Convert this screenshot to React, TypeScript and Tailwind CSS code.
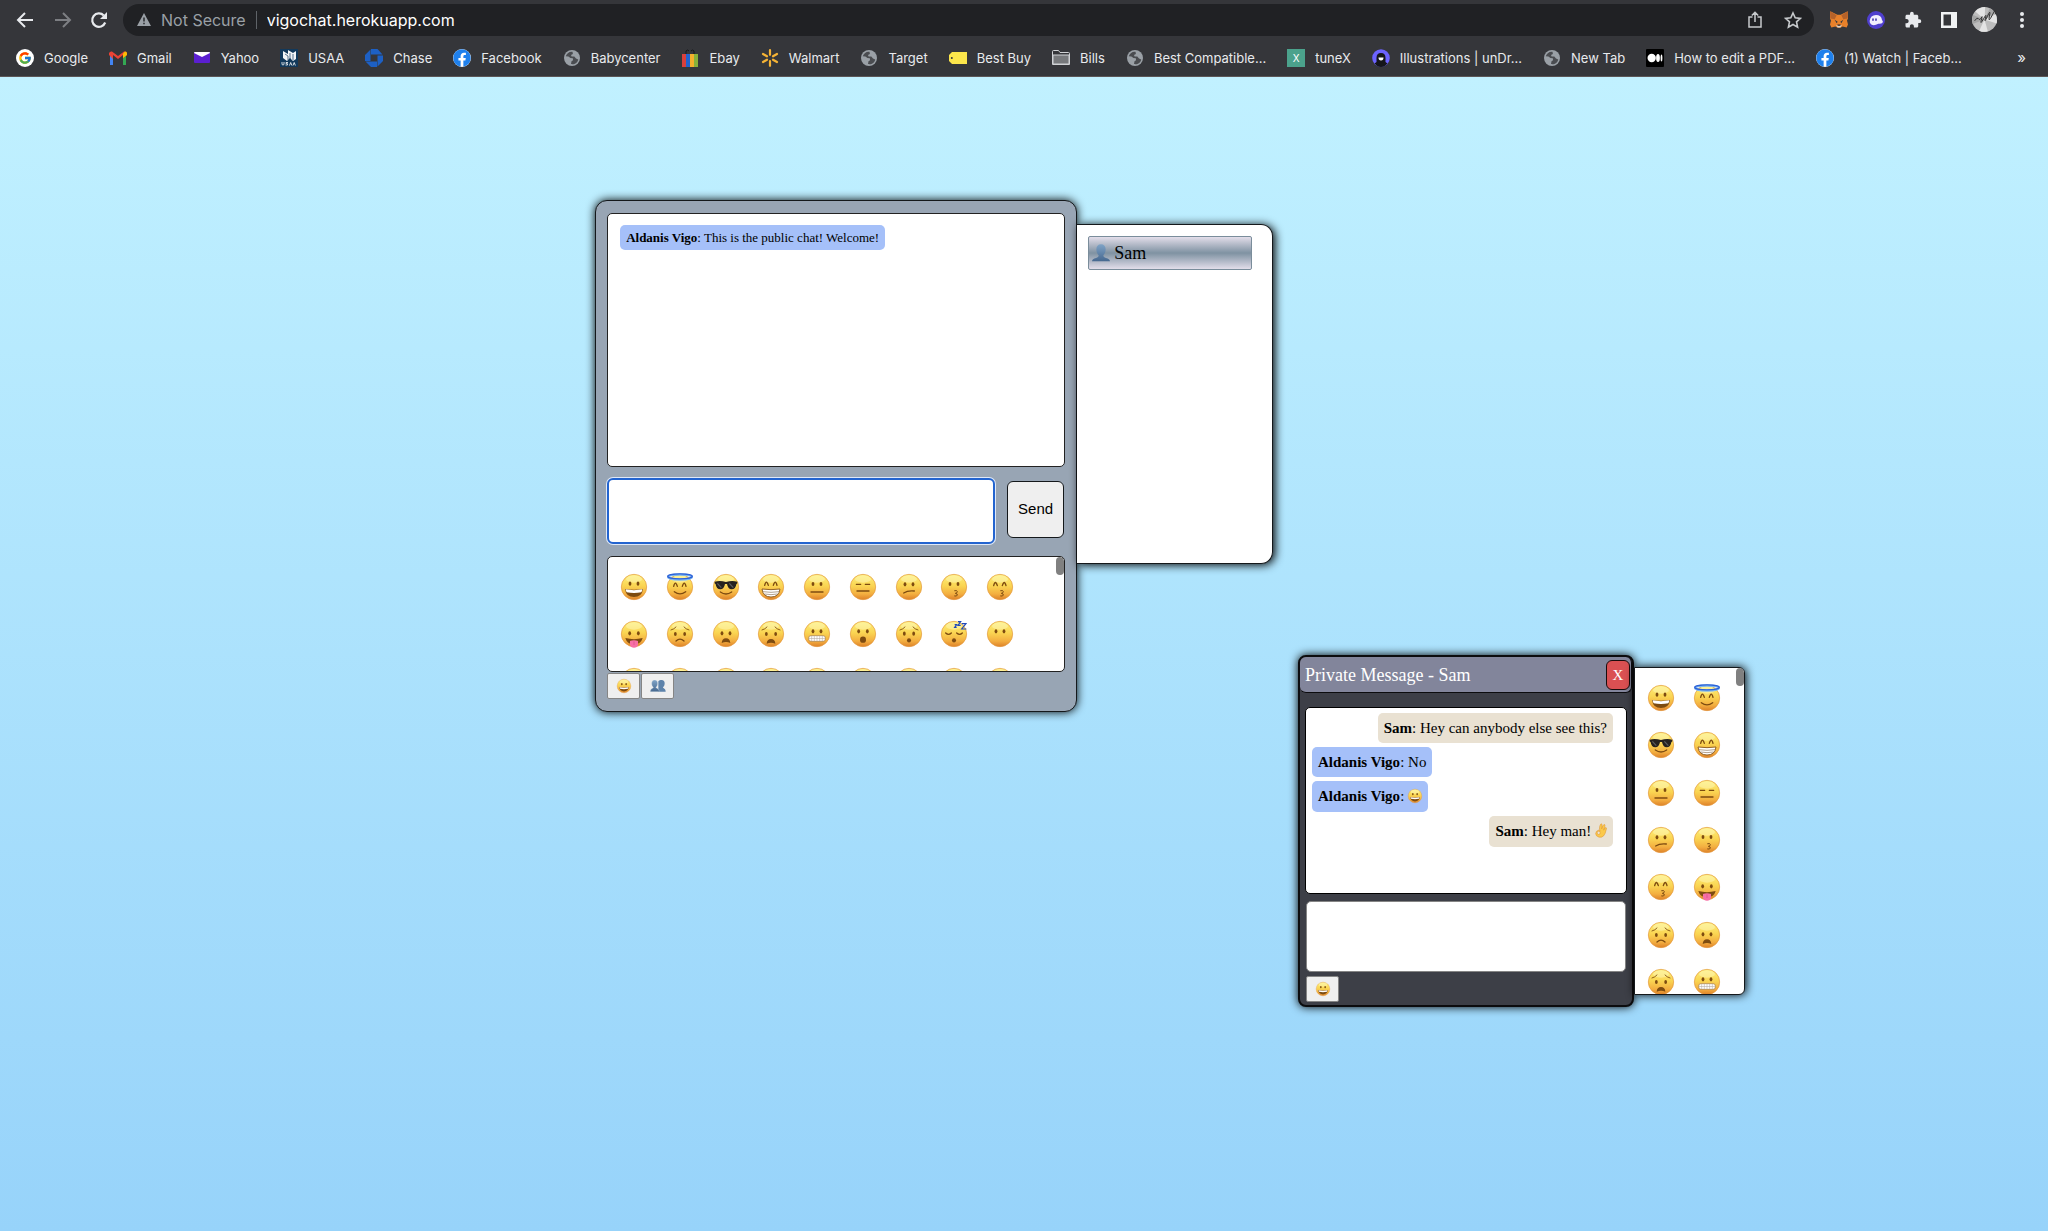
import React from 'react';
import { FcGoogle } from 'react-icons/fc';
import { FaFacebook } from 'react-icons/fa';
import { MdExtension } from 'react-icons/md';

type Mood =
  | 'grinning' | 'halo' | 'cool' | 'beaming' | 'neutral' | 'expressionless' | 'confused' | 'kissing' | 'kissing-smile'
  | 'tongue' | 'worried' | 'frowning' | 'anguished' | 'grimacing' | 'open' | 'hushed' | 'sleeping' | 'speechless';

const MOODS: Mood[] = [
  'grinning', 'halo', 'cool', 'beaming', 'neutral', 'expressionless', 'confused', 'kissing', 'kissing-smile',
  'tongue', 'worried', 'frowning', 'anguished', 'grimacing', 'open', 'hushed', 'sleeping', 'speechless',
];

const INK = '#7d4b10';

function DotEyes({ y, dx = 12 }: { y: number; dx?: number }) {
  return (
    <g fill={INK}>
      <ellipse cx={39 - dx} cy={y} rx="4.2" ry="6.2" />
      <ellipse cx={39 + dx} cy={y} rx="4.2" ry="6.2" />
    </g>
  );
}

function HappyEyes({ y }: { y: number }) {
  return (
    <g fill="none" stroke={INK} strokeWidth="4" strokeLinecap="round">
      <path d={`M20 ${y + 5}q5 -19 11 0`} />
      <path d={`M46 ${y + 5}q6 -19 11 0`} />
    </g>
  );
}

function Brows() {
  return (
    <g fill="none" stroke={INK} strokeWidth="2.6" strokeLinecap="round">
      <path d="M12 27q9 -2 15 -9" />
      <path d="M66 27q-9 -2 -15 -9" />
    </g>
  );
}

function Features({ mood }: { mood: Mood }) {
  const line = { fill: 'none', stroke: INK, strokeWidth: 4, strokeLinecap: 'round' as const };
  switch (mood) {
    case 'grinning':
      return (
        <>
          <DotEyes y={29} />
          <path d="M12 45q27 5 54 0q-3 24 -27 24q-24 0 -27 -24z" fill={INK} />
          <path d="M14 46q25 5 50 0q0 5 -3 9q-22 4 -44 0q-3 -4 -3 -9z" fill="#fff" />
        </>
      );
    case 'halo':
      return (
        <>
          <HappyEyes y={32} />
          <path d="M22 53q17 13 34 0" {...line} />
          <ellipse cx="39" cy="9" rx="36" ry="7.5" fill="none" stroke="#7cb7ef" strokeWidth="7" />
          <ellipse cx="39" cy="7" rx="37" ry="7.5" fill="none" stroke="#2f62d8" strokeWidth="4" />
        </>
      );
    case 'cool':
      return (
        <>
          <path d="M5 23q17 -4 34 1q17 -5 34 -1v5l-3 3q-2 15 -14 15q-11 0 -14 -16h-6q-3 16 -14 16q-12 0 -14 -15l-3 -3z" fill="#26221f" />
          <path d="M13 28l12 13M49 28l12 13" stroke="#5a5a5c" strokeWidth="4" />
          <path d="M22 54q17 12 34 0" {...line} />
        </>
      );
    case 'beaming':
      return (
        <>
          <HappyEyes y={29} />
          <path d="M12 45q27 4 54 0q-3 24 -27 24q-24 0 -27 -24z" fill="#fff" stroke={INK} strokeWidth="2.5" />
          <path d="M15 53q24 4 48 0M20 60q19 4 38 0" fill="none" stroke="#a58f78" strokeWidth="2.5" />
        </>
      );
    case 'neutral':
      return (<><DotEyes y={30} /><path d="M21 54h36" {...line} /></>);
    case 'expressionless':
      return (<><path d="M19 31h13M46 31h13M21 51h36" {...line} /></>);
    case 'confused':
      return (<><DotEyes y={31} /><path d="M23 57q12 -8 32 -6" {...line} /></>);
    case 'kissing':
    case 'kissing-smile':
      return (
        <>
          {mood === 'kissing' ? <DotEyes y={30} /> : <HappyEyes y={30} />}
          <path d="M41 50q8 -2 8 3q0 4 -6 5q7 1 6 5q-1 5 -8 3" fill="none" stroke={INK} strokeWidth="3" strokeLinecap="round" />
        </>
      );
    case 'tongue':
      return (
        <>
          <DotEyes y={37} dx={13} />
          <path d="M13 51q26 7 52 0q-5 19 -26 19q-21 0 -26 -19z" fill={INK} />
          <path d="M27 60q12 -4 24 0v11q-2 9 -12 9q-10 0 -12 -9z" fill="#f76fa6" />
          <path d="M39 61v11" stroke="#d84d86" strokeWidth="2" />
        </>
      );
    case 'worried':
      return (<><Brows /><DotEyes y={39} dx={14} /><path d="M27 60q12 -11 24 0" {...line} /></>);
    case 'frowning':
      return (<><DotEyes y={37} /><path d="M26 66q1 -14 13 -14q12 0 13 14q-13 -6 -26 0z" fill={INK} /></>);
    case 'anguished':
      return (<><Brows /><DotEyes y={39} dx={14} /><path d="M26 68q1 -14 13 -14q12 0 13 14q-13 -6 -26 0z" fill={INK} /></>);
    case 'grimacing':
      return (
        <>
          <DotEyes y={31} />
          <rect x="14" y="44" width="50" height="17" rx="7" fill="#fff" stroke="#a07a4c" strokeWidth="2" />
          <path d="M15 52.500h48M23 45v15M31 45v15M39 45v15M47 45v15M55 45v15" stroke="#b9aea4" strokeWidth="1.800" />
        </>
      );
    case 'open':
      return (<><DotEyes y={31} dx={13} /><ellipse cx="39" cy="56" rx="9" ry="9.5" fill={INK} /></>);
    case 'hushed':
      return (<><Brows /><DotEyes y={38} dx={14} /><ellipse cx="39" cy="58" rx="6" ry="6.5" fill={INK} /></>);
    case 'sleeping':
      return (
        <>
          <path d="M14 36q9 8 17 0M47 36q9 8 17 0" {...line} />
          <ellipse cx="39" cy="58" rx="6" ry="6.500" fill={INK} />
          <path d="M41 11h6l-6 8h6M51 2h8l-8 11h8M62 8h13l-13 16h14" fill="none" stroke="#2048b8" strokeWidth="3.500" />
        </>
      );
    default:
      return <DotEyes y={31} />;
  }
}

function Emoji({ mood, className }: { mood: Mood; className: string }) {
  return (
    <svg viewBox="0 0 78 78" className={`overflow-visible ${className}`} role="img" aria-label={mood}>
      <circle cx="39" cy="39" r="38" fill="url(#skin)" stroke="#e3953a" strokeWidth="2" />
      <ellipse cx="39" cy="15" rx="24" ry="11" fill="#fffbc4" opacity="0.45" />
      <Features mood={mood} />
    </svg>
  );
}

function Defs() {
  return (
    <svg className="absolute size-0" aria-hidden="true">
      <defs>
        <linearGradient id="skin" x1="0" y1="0" x2="0" y2="1">
          <stop offset="0" stopColor="#fdee7c" />
          <stop offset="0.45" stopColor="#fad552" />
          <stop offset="0.78" stopColor="#f3ae40" />
          <stop offset="1" stopColor="#dd8129" />
        </linearGradient>
        <linearGradient id="bust" x1="0" y1="0" x2="0" y2="1">
          <stop offset="0" stopColor="#7fa3c6" />
          <stop offset="1" stopColor="#46688f" />
        </linearGradient>
      </defs>
    </svg>
  );
}

function Bust({ className }: { className: string }) {
  return (
    <svg viewBox="0 0 54 54" className={className} aria-hidden="true">
      <path d="M27 1c9 0 14 6 14 15c0 8 -3 14 -7 18c0 5 3 6 8 8c8 2 11 4 12 10H0c1 -6 4 -8 12 -10c5 -2 8 -3 8 -8c-4 -4 -7 -10 -7 -18c0 -9 5 -15 14 -15z" fill="url(#bust)" />
    </svg>
  );
}

function Busts() {
  return (
    <svg viewBox="0 0 46 36" className="h-3 w-4" aria-hidden="true">
      <path d="M34 0c6 0 9 4 9 10c0 6 -2 9 -5 12c0 4 8 3 8 13H24V4c2 -3 6 -4 10 -4z" fill="#5d83ab" />
      <path d="M13 0c6 0 9 4 9 10c0 6 -2 9 -5 12c0 4 10 3 10 13H0c0 -10 9 -9 9 -13c-3 -3 -5 -6 -5 -12c0 -6 3 -10 9 -10z" fill="url(#bust)" stroke="#dfe6ee" strokeWidth="1" />
    </svg>
  );
}

function OkHand() {
  return (
    <svg viewBox="0 0 36 44" className="inline-block h-[15px] w-3 align-[-2px]" aria-label="ok hand" role="img">
      <path d="M15 24C12 16 14 7 17 3q4 -3 4 2l-1 12q3 -12 7 -13q4 0 3 4l-4 13q4 -9 7 -8q3 1 1 5q-3 15 -8 20q-6 6 -14 4q-10 -3 -10 -11q1 -8 8 -10q3 0 5 3z" fill="#fbc94a" stroke="#dc8f2a" strokeWidth="1.500" />
      <ellipse cx="11" cy="29" rx="4.500" ry="5" fill="#ebe3d5" stroke="#dc8f2a" strokeWidth="1.500" />
    </svg>
  );
}

const Globe = () => (
  <svg viewBox="0 0 16 16" className="size-4">
    <circle cx="8" cy="8" r="8" fill="#9aa0a6" />
    <path d="M8.500 1.800C6 1.200 2.600 3 1.800 6.200l2.600.3 2 1.600 2.400.2.300 2-1.600.9-.5 2.900c3.500.8 6.700-1.500 7.200-4.700l-2.200-.9-1.700-1.900-2.700-.2-.6-1.500L8.900 4z" fill="#4a4c50" />
  </svg>
);
const Gmail = () => (
  <svg viewBox="0 0 18 14" className="h-3.5 w-[18px]">
    <path d="M1 2v12h3V5z" fill="#4285f4" /><path d="M17 2v12h-3V5z" fill="#34a853" />
    <path d="M0 2Q1 0 3 .5L9 5l6-4.500Q17 0 18 2v2l-4 3V4L9 8 4 4v4L0 4z" fill="#ea4335" />
    <path d="M14 2.500l2-2Q18 .3 18 2.500V4l-4 3z" fill="#fbbc04" />
  </svg>
);
const Yahoo = () => (
  <svg viewBox="0 0 16 11" className="h-[11px] w-4"><rect width="16" height="11" rx="1" fill="#5b1fd1" /><path d="M0 1Q0 0 1 0h14q1 0 1 1L8 5z" fill="#fff" /></svg>
);
const Usaa = () => (
  <svg viewBox="0 0 18 18" className="size-[18px]">
    <rect width="18" height="18" fill="#12395b" />
    <path d="M3 2l5 3v6l-1 1-4-3zM8 1l5 3 3-2v8l-3 2-3-3-2 2z" fill="#f3f5f7" />
    <path d="M5 5l3 2v4M10 4v6M13 5v6" fill="none" stroke="#12395b" strokeWidth=".7" />
    <path d="M2 13v2q0 1 1 1t1-1v-2M8 13.500H6v1.200h1.500V16H5.500M9.500 16.500l1.200-3 1.200 3M13 16.500l1.200-3 1.200 3" fill="none" stroke="#fff" strokeWidth=".8" />
  </svg>
);
const Chase = () => (
  <svg viewBox="0 0 18 18" className="size-[18px]">
    <path d="M6 0h6.500L17.500 5.500H6zM18 6.500V12l-5.500 5.500V6.500zM12 18H6L.5 12.500H12zM0 12V6L5.500.5V12z" fill="#1d60c4" />
  </svg>
);
const Ebay = () => (
  <svg viewBox="0 0 16 18" className="h-[18px] w-4">
    <path d="M4 5V2q1.500-2 3 0M9 2q1.500-2 3 0v3" fill="none" stroke="#17181a" />
    <path d="M0 5h4v13H0z" fill="#d9403c" /><path d="M4 5h4v13H4z" fill="#2163cf" /><path d="M8 5h4v13H8z" fill="#f4b02c" /><path d="M12 5h4v13h-4z" fill="#87b13a" />
  </svg>
);
const Walmart = () => (
  <svg viewBox="0 0 18 18" className="size-[18px]" stroke="#f5b335" strokeWidth="2.200" strokeLinecap="round">
    <path d="M9 1.200v4.600M9 12.200v4.600M2 5l4 2.300M12 10.700L16 13M2 13l4-2.300M12 7.300L16 5" />
  </svg>
);
const Tag = () => (
  <svg viewBox="0 0 18 12" className="h-3 w-[18px]"><path d="M3 0h15v12H3L0 9V3z" fill="#fce64b" /><circle cx="2.800" cy="6" r="1" fill="#35363a" /></svg>
);
const Folder = () => (
  <svg viewBox="0 0 18 15" className="h-[15px] w-[18px]" fill="none" stroke="#d0d2d5">
    <path d="M.5 14.500V1.500q0-1 1-1h5l1.500 2h8.500q1 0 1 1v11z" /><path d="M1 5h16v9H1z" fill="#77797c" />
  </svg>
);
const TuneX = () => <span className="flex size-[18px] items-center justify-center bg-[#4ba28c] text-[10px] leading-none text-white">X</span>;
const Undraw = () => (
  <svg viewBox="0 0 18 18" className="size-[18px]">
    <circle cx="9" cy="9" r="8.800" fill="#6c63ff" />
    <path d="M4.500 13V9q0-5 4.500-5t4.500 5v4l2 1.500q-3 3.500-6.500 3.500T2.500 14.500z" fill="#15161a" /><path d="M6.500 8.500h5q0 3-2.500 3t-2.500-3z" fill="#fff" />
  </svg>
);
const Medium = () => (
  <svg viewBox="0 0 18 18" className="size-[18px]">
    <rect width="18" height="18" rx="1" fill="#000" /><circle cx="5.700" cy="9" r="4.200" fill="#fff" /><ellipse cx="12" cy="9" rx="1.900" ry="4" fill="#fff" /><ellipse cx="15.500" cy="9" rx=".9" ry="3.600" fill="#fff" />
  </svg>
);
const Facebook = () => <span className="flex size-[18px] items-center justify-center rounded-full bg-white text-[#1f80ec]"><FaFacebook className="size-[18px]" /></span>;
const Google = () => <span className="flex size-[18px] items-center justify-center rounded-full bg-white"><FcGoogle className="size-3.5" /></span>;

const BOOKMARKS: { label: string; icon: () => React.JSX.Element }[] = [
  { label: 'Google', icon: Google },
  { label: 'Gmail', icon: Gmail },
  { label: 'Yahoo', icon: Yahoo },
  { label: 'USAA', icon: Usaa },
  { label: 'Chase', icon: Chase },
  { label: 'Facebook', icon: Facebook },
  { label: 'Babycenter', icon: Globe },
  { label: 'Ebay', icon: Ebay },
  { label: 'Walmart', icon: Walmart },
  { label: 'Target', icon: Globe },
  { label: 'Best Buy', icon: Tag },
  { label: 'Bills', icon: Folder },
  { label: 'Best Compatible...', icon: Globe },
  { label: 'tuneX', icon: TuneX },
  { label: 'Illustrations | unDr...', icon: Undraw },
  { label: 'New Tab', icon: Globe },
  { label: 'How to edit a PDF...', icon: Medium },
  { label: '(1) Watch | Faceb...', icon: Facebook },
];

function Browser() {
  return (
    <header className="border-b border-[#5c5656] bg-[#35363a] font-[Inter,sans-serif] text-[#e8eaed]">
      <div className="flex h-[39px] items-center pr-5 pl-4">
        <button aria-label="Back" className="mr-5"><svg viewBox="0 0 18 18" className="size-[18px]" fill="none" stroke="#e8eaed" strokeWidth="2"><path d="M17 9H2.500M9 2L2 9l7 7" /></svg></button>
        <button aria-label="Forward" className="mr-[18px]"><svg viewBox="0 0 18 18" className="size-[18px]" fill="none" stroke="#7d7f83" strokeWidth="2"><path d="M1 9h14.500M9 2l7 7-7 7" /></svg></button>
        <button aria-label="Reload" className="mr-[15px]"><svg viewBox="0 0 18 18" className="size-[18px]"><path d="M15.200 11.500A6.700 6.700 0 1 1 13.800 4.500" fill="none" stroke="#e8eaed" strokeWidth="2.200" /><path d="M17 1v7h-7z" fill="#e8eaed" /></svg></button>
        <div className="flex h-8 flex-1 items-center rounded-full bg-[#202124] pr-3 pl-3.5">
          <svg viewBox="0 0 14 13" className="mr-2.5 h-[13px] w-3.5"><path d="M7 0l7 13H0z" fill="#9aa0a6" /><path d="M7 4.500v4M7 9.800v1.500" stroke="#202124" strokeWidth="1.400" /></svg>
          <span className="text-base text-[#9aa0a6]">Not Secure</span>
          <span className="mx-2.5 h-[18px] w-px bg-[#5f6368]" />
          <input aria-label="Address" defaultValue="vigochat.herokuapp.com" className="min-w-0 flex-1 bg-transparent text-base text-white outline-none" />
          <button aria-label="Share" className="mr-[22px]"><svg viewBox="0 0 14 17" className="h-[17px] w-3.5" fill="none" stroke="#c6c9cc" strokeWidth="1.500"><path d="M4.500 6H1v10h12V6H9.500M7 11V1.500M3.800 4.500L7 1.300l3.200 3.200" /></svg></button>
          <button aria-label="Bookmark this page"><svg viewBox="0 0 18 18" className="size-[18px]" fill="none" stroke="#c6c9cc" strokeWidth="1.600"><path d="M9 2l2.200 4.800 5.200.6-3.900 3.500 1.100 5.200L9 13.500l-4.600 2.600 1.100-5.200L1.600 7.400l5.200-.6z" /></svg></button>
        </div>
        <div className="ml-4 flex items-center gap-[19px]">
          <button aria-label="MetaMask">
            <svg viewBox="0 0 54 50" className="h-[17px] w-[18px]">
              <path d="M1 0l21 11h10L53 0l1 22-3 6 3 12-4 9-12-3-7 4h-8l-7-4-12 3-4-9 3-12-3-6z" fill="#e8812a" />
              <path d="M1 0l19 12-6 12-13-2zM53 0L34 12l6 12 13-2z" fill="#b5622a" />
              <path d="M14 26l9 6-3 4zM40 26l-9 6 3 4z" fill="#33383e" /><path d="M18 42h18l-5 7h-8z" fill="#d8d2cc" /><path d="M22 40h10l-1 4h-8z" fill="#2a2420" />
            </svg>
          </button>
          <button aria-label="Phantom">
            <svg viewBox="0 0 54 54" className="size-[18px]"><circle cx="27" cy="27" r="27" fill="#4f3fce" /><path d="M8 30q2-18 19-18 16 0 18 15 5 4 1 9-4 3-12 2-12 7-20 3-7-3-6-11z" fill="#f2efff" /><ellipse cx="18" cy="26" rx="2.500" ry="4" fill="#4033ad" /><ellipse cx="27" cy="26" rx="2.500" ry="4" fill="#4033ad" /></svg>
          </button>
          <button aria-label="Extensions"><MdExtension className="size-[18px]" /></button>
          <button aria-label="Side panel"><svg viewBox="0 0 16 16" className="size-4"><path d="M0 0h16v16H0z" fill="#f1f3f4" /><path d="M2.500 2.500H10v11H2.500z" fill="#35363a" /></svg></button>
          <button aria-label="Profile" className="-mx-1">
            <svg viewBox="0 0 76 76" className="size-[25px]"><circle cx="38" cy="38" r="38" fill="#bdbdbd" /><path d="M38 38L10 14Q22 0 40 0zM38 38l34-16q6 14 3 28zM38 38l10 36q-14 4-26-2z" fill="#e4e4e4" /><path d="M38 38L2 52Q-2 38 4 24zM38 38L54 4q10 4 15 14z" fill="#a5a5a5" /><path d="M8 42q8-12 11-7t6 2 5-7-2 11 7-5 6-2 6-6 6 0 9-4 9-2" fill="none" stroke="#333" strokeWidth="3" /></svg>
          </button>
          <button aria-label="Menu" className="mr-1 ml-2"><svg viewBox="0 0 4 16" className="h-4 w-1" fill="#e8eaed"><circle cx="2" cy="2" r="2" /><circle cx="2" cy="8" r="2" /><circle cx="2" cy="14" r="2" /></svg></button>
        </div>
      </div>
      <nav className="flex h-[37px] items-center pr-[22px] pl-4">
        <ul className="flex flex-1 items-center gap-[21px]">
          {BOOKMARKS.map(({ label, icon: Icon }) => (
            <li key={label}>
              <a href="#" className="flex items-center gap-2.5 text-[13px] leading-4 whitespace-nowrap">
                <span className="flex w-[18px] justify-center" aria-hidden="true"><Icon /></span>
                {label}
              </a>
            </li>
          ))}
        </ul>
        <button aria-label="More bookmarks" className="text-[15px] leading-4">»</button>
      </nav>
    </header>
  );
}

function Thumb() {
  return <span className="absolute top-0 right-0 h-[18px] w-2 rounded-full bg-[#808080]" aria-hidden="true" />;
}

function Bubble({ from, mine, className, children }: { from: string; mine?: boolean; className: string; children: React.ReactNode }) {
  return (
    <p className={`rounded-[5px] px-1.5 ${mine ? 'self-start bg-[#a5c0f9]' : 'self-end bg-[#e9e1d2]'} ${className}`}>
      <b>{from}</b>: {children}
    </p>
  );
}

const TOOL = 'flex h-[26px] w-[33px] items-center justify-center rounded-xs border border-[#858585] bg-[#efefef]';

function PublicChat() {
  return (
    <section aria-label="Public chat" className="flex w-[482px] flex-col rounded-xl border border-[#14181b] bg-[#98a5b4] px-[11px] pt-3 pb-3 shadow-[0_0_10px_#000]">
      <div className="flex h-[254px] flex-col rounded-[5px] border border-[#222] bg-white px-3 py-[11px]">
        <Bubble from="Aldanis Vigo" mine className="text-[13px] leading-[25px]">This is the public chat! Welcome!</Bubble>
      </div>
      <div className="mt-[11px] flex items-center gap-3 pr-px">
        <textarea aria-label="Message" className="h-[66px] min-w-0 flex-1 resize-none rounded-md border-2 border-[#2364cf] bg-white p-1 ring-1 ring-[#dfe9f8] outline-none" />
        <button className="mb-1 size-[57px] rounded-md border border-[#14181b] bg-[#efefef] font-['Liberation_Sans',sans-serif] text-[15px]">Send</button>
      </div>
      <div className="relative mt-3 h-[116px] overflow-hidden rounded-[5px] border border-[#222] bg-white">
        <div className="mt-1.5 ml-[3px] grid h-[142px] w-[412px] grid-cols-9 grid-rows-3">
          {[...MOODS, ...MOODS.slice(9)].map((mood, i) => (
            <button key={i} className="flex items-center justify-center"><Emoji mood={i < 18 ? mood : 'speechless'} className="size-[26px]" /></button>
          ))}
        </div>
        <Thumb />
      </div>
      <div className="mt-px flex gap-px">
        <button aria-label="Toggle emojis" className={TOOL}><Emoji mood="grinning" className="size-3.5" /></button>
        <button aria-label="Toggle users" className={TOOL}><Busts /></button>
      </div>
    </section>
  );
}

function UserList() {
  return (
    <aside aria-label="Users" className="mt-6 h-[340px] w-[196px] rounded-r-xl border border-l-0 border-[#14181b] bg-white py-[11px] pr-5 pl-[11px] shadow-[2px_1px_10px_#000]">
      <button className="flex h-[34px] w-full items-center gap-1 rounded-xs border border-[#7a8d9b] bg-linear-to-b from-[#e3deea] via-[#7f92a2] to-[#e3deea] pl-[3px] text-lg text-black">
        <Bust className="size-[18px]" />
        Sam
      </button>
    </aside>
  );
}

function PrivateMessage() {
  return (
    <div className="absolute top-[578px] left-[1298px] flex items-start">
      <section aria-label="Private message" className="w-[336px] rounded-lg border-2 border-[#0c0c0e] bg-[#3d3f47] pb-[3px] shadow-[0_0_10px_#000]">
        <div className="flex h-9 items-center justify-between rounded-md border-r border-b border-[#0c0c0e] bg-[#82859b] pr-px pl-[5px]">
          <h2 className="text-lg leading-5 text-white">Private Message - Sam</h2>
          <button aria-label="Close" className="h-[30px] w-6 rounded-md border border-[#1a0c0c] bg-[#da5052] text-[15px] leading-6 text-white">X</button>
        </div>
        <div className="mx-[5px] mt-3.5 flex h-[187px] flex-col gap-1 rounded-[5px] border border-black bg-white pt-[5px] pr-[13px] pl-1.5 text-[15px]">
          <Bubble from="Sam" className="leading-[30px]">Hey can anybody else see this?</Bubble>
          <Bubble from="Aldanis Vigo" mine className="leading-[30px]">No</Bubble>
          <Bubble from="Aldanis Vigo" mine className="leading-[31px]"><Emoji mood="grinning" className="inline-block size-3.5 align-[-2px]" /></Bubble>
          <Bubble from="Sam" className="leading-[31px]">Hey man! <OkHand /></Bubble>
        </div>
        <div className="mx-1.5 mt-[7px]">
          <textarea aria-label="Private message text" className="block h-[71px] w-full resize-none rounded-[5px] border border-[#858585] bg-white p-1 outline-none" />
          <button aria-label="Toggle emojis" className={`mt-1 ${TOOL}`}><Emoji mood="grinning" className="size-3.5" /></button>
        </div>
      </section>
      <aside aria-label="Emojis" className="relative mt-3 h-[328px] w-[111px] overflow-hidden rounded-r-md border border-[#14181b] bg-white shadow-[1px_0_10px_#000]">
        <div className="mt-1.5 ml-[3px] grid h-[332px] w-[92px] grid-cols-2 grid-rows-7">
          {MOODS.slice(0, 14).map((mood) => (
            <button key={mood} className="flex items-center justify-center"><Emoji mood={mood} className="size-[26px]" /></button>
          ))}
        </div>
        <Thumb />
      </aside>
    </div>
  );
}

export default function App() {
  return (
    <div className="flex min-h-screen flex-col">
      <Defs />
      <Browser />
      <main className="relative flex flex-1 items-start bg-linear-to-b from-[#c1f1ff] to-[#97d3fa] pt-[123px] pl-[29.06%] font-['Liberation_Serif',serif] text-black">
        <PublicChat />
        <UserList />
        <PrivateMessage />
      </main>
    </div>
  );
}
